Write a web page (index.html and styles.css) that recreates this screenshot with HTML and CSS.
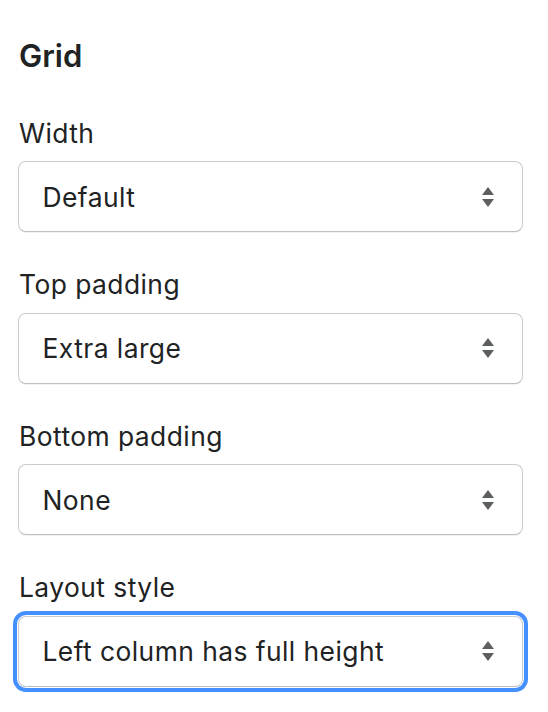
FILE: index.html
```html
<!DOCTYPE html>
<html lang="en">
<head>
<meta charset="utf-8">
<title>Grid settings</title>
<link rel="stylesheet" href="styles.css">
</head>
<body>
<div class="panel">
  <h2 class="heading">Grid</h2>

  <div class="field">
    <div class="label">Width</div>
    <div class="select">
      <span class="value">Default</span>
      <svg class="arrows" width="12" height="20" viewBox="0 0 12 20"><path d="M6 0 L12 8 H0 Z M0 12 H12 L6 20 Z" fill="#5c5f62"/></svg>
    </div>
  </div>

  <div class="field">
    <div class="label">Top padding</div>
    <div class="select">
      <span class="value">Extra large</span>
      <svg class="arrows" width="12" height="20" viewBox="0 0 12 20"><path d="M6 0 L12 8 H0 Z M0 12 H12 L6 20 Z" fill="#5c5f62"/></svg>
    </div>
  </div>

  <div class="field">
    <div class="label">Bottom padding</div>
    <div class="select">
      <span class="value">None</span>
      <svg class="arrows" width="12" height="20" viewBox="0 0 12 20"><path d="M6 0 L12 8 H0 Z M0 12 H12 L6 20 Z" fill="#5c5f62"/></svg>
    </div>
  </div>

  <div class="field">
    <div class="label">Layout style</div>
    <div class="select focused">
      <span class="value">Left column has full height</span>
      <svg class="arrows" width="12" height="20" viewBox="0 0 12 20"><path d="M6 0 L12 8 H0 Z M0 12 H12 L6 20 Z" fill="#5c5f62"/></svg>
    </div>
  </div>
</div>
</body>
</html>
```

FILE: styles.css
```css
html, body {
  margin: 0;
  padding: 0;
  background: #ffffff;
}

body {
  font-family: Inter, "Noto Sans", "Liberation Sans", sans-serif;
  color: #202223;
  min-height: 712px;
}

.panel {
  width: 505px;
  padding: 36px 0 24px 18px;
  display: flex;
  flex-direction: column;
}

.heading {
  margin: 0;
  font-size: 31px;
  line-height: 40px;
  font-weight: 600;
  height: 40px;
  padding-left: 1px;
}

.field {
  margin-top: 40.5px;
  display: flex;
  flex-direction: column;
  gap: 12.5px;
}

.field + .field {
  margin-top: 36px;
}

.label {
  font-size: 26.4px;
  line-height: 32px;
  letter-spacing: 0.45px;
  padding-left: 1px;
}

.select {
  box-sizing: border-box;
  height: 71px;
  border: 1.5px solid #c9cccf;
  border-bottom-color: #babfc3;
  border-radius: 8px;
  display: flex;
  align-items: center;
  justify-content: space-between;
  padding: 0 28px 0 23.5px;
  box-shadow: 0 1px 0 rgba(0, 0, 0, 0.05);
  background: #ffffff;
}

.value {
  font-size: 26.4px;
  line-height: 32px;
  letter-spacing: 0.45px;
}

.arrows {
  display: block;
}

.select.focused {
  box-shadow: 0 0 0 1px #ffffff, 0 0 0 5px #458fff;
}
```
